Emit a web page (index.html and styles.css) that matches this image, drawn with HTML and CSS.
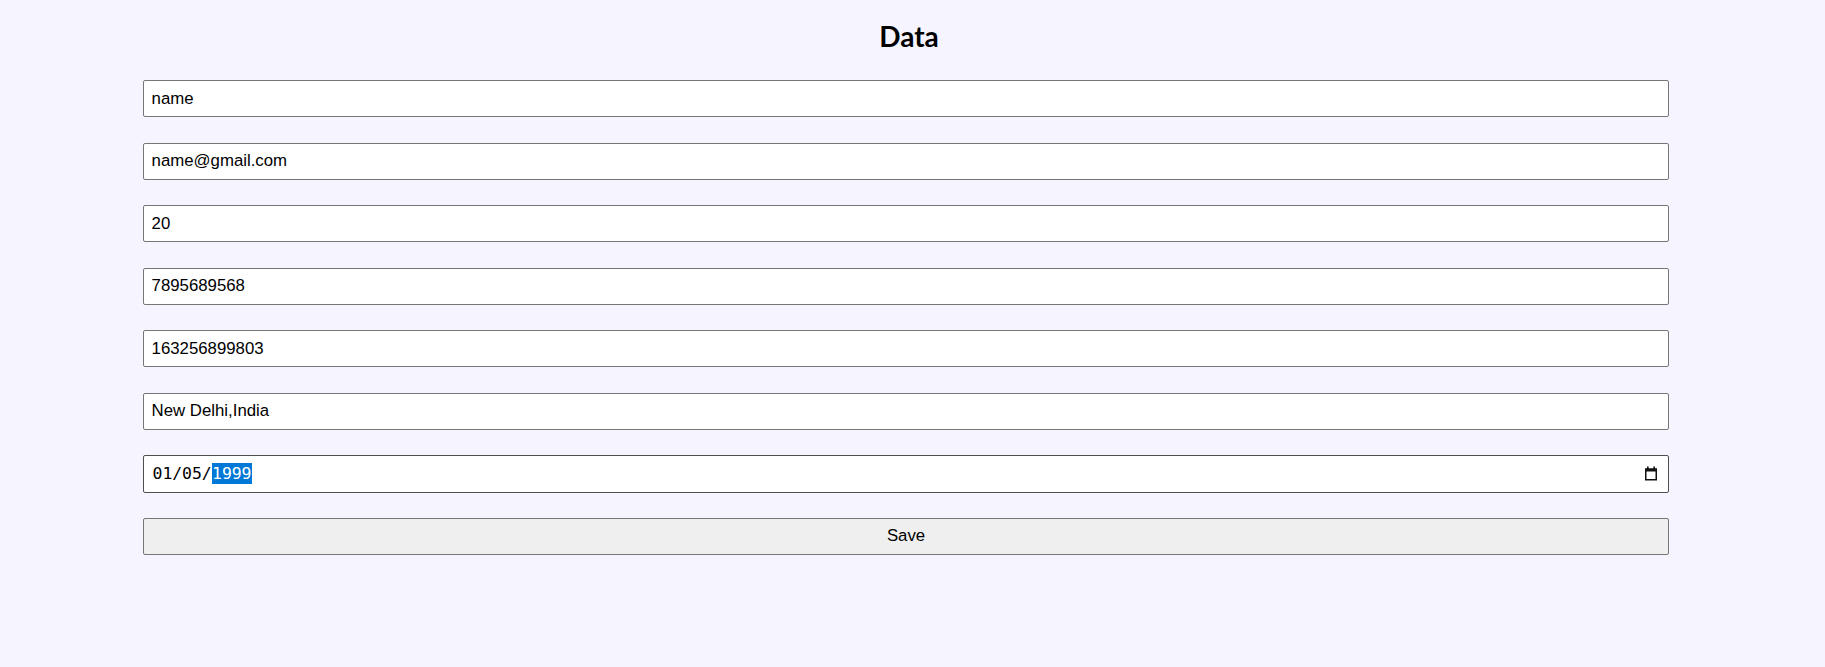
FILE: index.html
```html
<!DOCTYPE html>
<html lang="en">
<head>
<meta charset="utf-8">
<title>Data</title>
<link rel="stylesheet" href="styles.css">
</head>
<body>
<main class="page">
  <h1 class="title">Data</h1>
  <form class="form">
    <input class="field" type="text" value="name">
    <input class="field" type="text" value="name@gmail.com">
    <input class="field" type="text" value="20">
    <input class="field" type="text" value="7895689568">
    <input class="field" type="text" value="163256899803">
    <input class="field" type="text" value="New Delhi,India">
    <div class="field date-field">
      <span class="date-text">01/05/<span class="sel">1999</span></span>
      <svg class="cal" width="14" height="15" viewBox="0 0 14 15" aria-hidden="true">
        <rect x="1.75" y="3.25" width="10.5" height="10.5" fill="none" stroke="#111" stroke-width="1.5"/>
        <rect x="1" y="2.5" width="12" height="3" fill="#111"/>
        <rect x="3" y="0.5" width="1.6" height="3" fill="#111"/>
        <rect x="9.4" y="0.5" width="1.6" height="3" fill="#111"/>
      </svg>
    </div>
    <button class="save" type="button">Save</button>
  </form>
</main>
</body>
</html>
```
FILE: styles.css
```css
html, body {
  margin: 0;
  padding: 0;
}
body {
  background: #f6f5ff;
  font-family: "Liberation Sans", Arial, sans-serif;
  color: #000;
}
.page {
  width: 1525.5px;
  margin-left: 143.3px;
  padding-top: 19.3px;
}
.title {
  margin: 0;
  font-family: Lato, "Open Sans", sans-serif;
  font-weight: 700;
  font-size: 28px;
  line-height: 34px;
  text-align: center;
  padding-left: 6px;
}
.form {
  margin-top: 26.7px;
  display: flex;
  flex-direction: column;
  gap: 25.25px;
}
.field {
  box-sizing: border-box;
  height: 37.3px;
  width: 100%;
  margin: 0;
  padding: 0 7.3px;
  border: 1px solid #767676;
  border-radius: 2px;
  background: #fff;
  font-family: "Liberation Sans", Arial, sans-serif;
  font-size: 16.8px;
  color: #000;
  outline: none;
}
.date-field {
  display: flex;
  align-items: center;
  justify-content: space-between;
  border-color: #4f4f4f;
  padding: 0 10px 0 8.3px;
}
.date-text {
  font-family: "DejaVu Sans Mono", "Liberation Mono", monospace;
  font-size: 16.5px;
  line-height: 21px;
  letter-spacing: -0.1px;
}
.sel {
  background: #0078d7;
  color: #fff;
  display: inline-block;
  padding: 0 0.5px;
}
.cal {
  display: block;
}
.save {
  box-sizing: border-box;
  height: 37.3px;
  width: 100%;
  margin: 0;
  border: 1px solid #767676;
  border-radius: 2px;
  background: #efefef;
  font-family: "Liberation Sans", Arial, sans-serif;
  font-size: 16.8px;
  color: #000;
}
```
